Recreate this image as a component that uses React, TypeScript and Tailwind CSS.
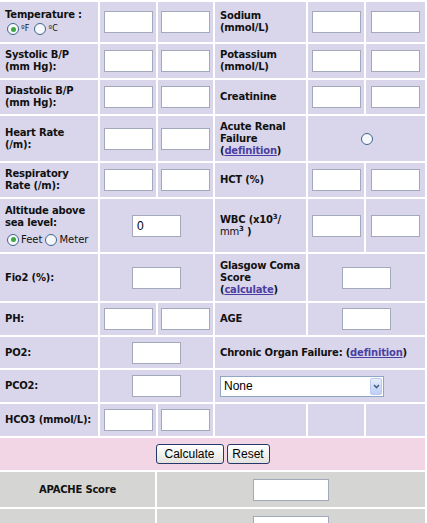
import type { ReactNode } from "react";

type CellProps = { children?: ReactNode; className?: string };

function Cell({ children, className = "" }: CellProps) {
  return <div className={`flex items-center bg-[#d9d6eb] ${className}`}>{children}</div>;
}

function Label({ children, className = "" }: CellProps) {
  return (
    <Cell className={`px-[5px] text-[10px] leading-[12px] font-bold tracking-[-0.2px] ${className}`}>
      <div>{children}</div>
    </Cell>
  );
}

function TextBox({ value = "", wide = false }: { value?: string; wide?: boolean }) {
  return (
    <input
      type="text"
      defaultValue={value}
      className={`h-[22px] border border-[#a3a9bb] bg-white px-[4px] font-['Liberation_Sans',sans-serif] text-[12px] text-black outline-none ${
        wide ? "w-[76px]" : "w-[49px]"
      }`}
    />
  );
}

function Field({ span = false, value }: { span?: boolean; value?: string }) {
  return (
    <Cell className={`justify-center ${span ? "col-span-2" : ""}`}>
      <TextBox value={value} />
    </Cell>
  );
}

function Radio({ checked = false }: { checked?: boolean }) {
  return (
    <span className="flex h-[12px] w-[12px] shrink-0 items-center justify-center rounded-full border border-[#3d6690] bg-[#f6f7fa]">
      {checked && <span className="h-[5px] w-[5px] rounded-full bg-[#3ea83e]" />}
    </span>
  );
}

function DefLink({ text }: { text: string }) {
  return (
    <>
      (<a href="#" className="text-[#4b3ea3] underline">{text}</a>)
    </>
  );
}

export default function App() {
  return (
    <div className="h-[523px] overflow-hidden bg-white pt-[2px] pr-[2px] font-['DejaVu_Sans',sans-serif] text-[#111]">
      <div className="flex flex-col gap-[2px]">
        <div className="grid grid-cols-[98px_56px_55px_91px_56px_59px] grid-rows-[40px_34px_34px_45px_34px_53px_47px_32px_31px_32px_32px] gap-[2px]">
          <Label>
            <div>Temperature :</div>
            <div className="mt-[2px] flex h-[13px] items-center pl-[2px] text-[8px] font-normal tracking-normal">
              <Radio checked />
              <span className="ml-[2px]">ºF</span>
              <span className="ml-[5px]">
                <Radio />
              </span>
              <span className="ml-[2px]">ºC</span>
            </div>
          </Label>
          <Field />
          <Field />
          <Label>
            Sodium
            <br />
            (mmol/L)
          </Label>
          <Field />
          <Field />

          <Label>
            Systolic B/P
            <br />
            (mm Hg):
          </Label>
          <Field />
          <Field />
          <Label>
            Potassium
            <br />
            (mmol/L)
          </Label>
          <Field />
          <Field />

          <Label>
            Diastolic B/P
            <br />
            (mm Hg):
          </Label>
          <Field />
          <Field />
          <Label>Creatinine</Label>
          <Field />
          <Field />

          <Label>
            Heart Rate
            <br />
            (/m):
          </Label>
          <Field />
          <Field />
          <Label>
            Acute Renal
            <br />
            Failure
            <br />
            <DefLink text="definition" />
          </Label>
          <Cell className="col-span-2 justify-center">
            <Radio />
          </Cell>

          <Label>
            Respiratory
            <br />
            Rate (/m):
          </Label>
          <Field />
          <Field />
          <Label>HCT (%)</Label>
          <Field />
          <Field />

          <Label>
            Altitude above
            <br />
            sea level:
            <div className="mt-[4px] flex h-[14px] items-center pl-[2px] font-normal tracking-normal">
              <Radio checked />
              <span className="ml-[2px]">Feet</span>
              <span className="ml-[3px]">
                <Radio />
              </span>
              <span className="ml-[2px]">Meter</span>
            </div>
          </Label>
          <Field span value="0" />
          <Label>
            WBC (x10<sup className="text-[7px]">3</sup>/
            <br />
            <span className="font-normal">mm</span>
            <sup className="text-[7px]">3</sup> )
          </Label>
          <Field />
          <Field />

          <Label>Fio2 (%):</Label>
          <Field span />
          <Label>
            Glasgow Coma
            <br />
            Score
            <br />
            <DefLink text="calculate" />
          </Label>
          <Field span />

          <Label>PH:</Label>
          <Field />
          <Field />
          <Label>AGE</Label>
          <Field span />

          <Label>PO2:</Label>
          <Field span />
          <Label className="col-span-3 whitespace-nowrap">
            Chronic Organ Failure: <DefLink text="definition" />
          </Label>

          <Label>PCO2:</Label>
          <Field span />
          <Cell className="col-span-3 px-[5px]">
            <div className="flex h-[21px] w-[164px] items-center border border-[#8fa6c4] bg-white pl-[3px] pr-[1px]">
              <span className="flex-1 font-['Liberation_Sans',sans-serif] text-[12px] text-black">None</span>
              <span className="flex h-[17px] w-[12px] items-center justify-center rounded-[2px] border border-[#bccbed] bg-linear-to-b from-[#e6edfd] to-[#bccff7]">
                <svg width="7" height="5" viewBox="0 0 7 5">
                  <path d="M1 1l2.5 2.5L6 1" stroke="#4a5d86" strokeWidth="1.6" fill="none" />
                </svg>
              </span>
            </div>
          </Cell>

          <Label className="whitespace-nowrap">HCO3 (mmol/L):</Label>
          <Field />
          <Field />
          <Cell />
          <Cell />
          <Cell />
        </div>

        <div className="flex h-[32px] items-center justify-center gap-[3px] bg-[#f2d6e6]">
          <button
            type="button"
            className="h-[20px] w-[68px] rounded-[3px] border border-[#22396a] bg-linear-to-b from-white to-[#e4e3de] font-['Liberation_Sans',sans-serif] text-[12px] text-black"
          >
            Calculate
          </button>
          <button
            type="button"
            className="h-[20px] w-[43px] rounded-[3px] border border-[#22396a] bg-linear-to-b from-white to-[#e4e3de] font-['Liberation_Sans',sans-serif] text-[12px] text-black"
          >
            Reset
          </button>
        </div>

        <div className="grid grid-cols-[155px_268px] grid-rows-[35px_35px] gap-[2px]">
          <div className="flex items-center justify-center bg-[#d5d5d3] text-[10px] font-bold tracking-[-0.2px]">
            APACHE Score
          </div>
          <div className="flex items-center justify-center bg-[#d5d5d3]">
            <TextBox wide />
          </div>
          <div className="bg-[#d5d5d3]" />
          <div className="flex items-center justify-center bg-[#d5d5d3]">
            <TextBox wide />
          </div>
        </div>
      </div>
    </div>
  );
}
